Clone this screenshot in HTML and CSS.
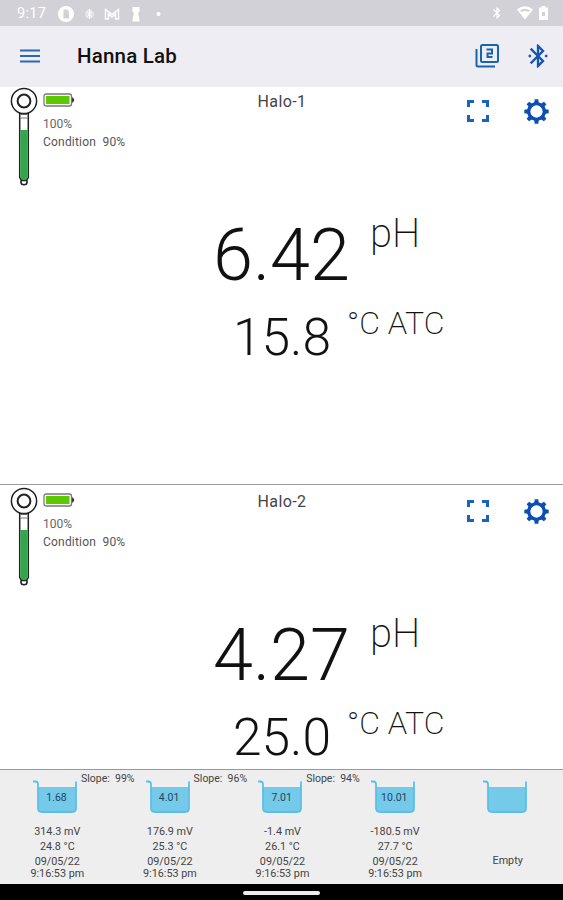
FILE: index.html
```html
<!DOCTYPE html>
<html lang="en">
<head>
  <meta charset="UTF-8">
  <title>Hanna Lab</title>
  <link rel="stylesheet" href="styles.css">
</head>
<body>

<!-- shared shapes -->
<svg class="defs">
  <symbol id="bluetooth" viewBox="0 0 24 24">
    <path d="M17.71 7.71L12 2h-1v7.59L6.41 5 5 6.41 10.59 12 5 17.59 6.41 19 11 14.41V22h1l5.71-5.71-4.3-4.29 4.3-4.29zM13 5.83l1.88 1.88L13 9.59V5.83zm1.88 10.46L13 18.17v-3.76l1.88 1.88z"/>
  </symbol>
  <symbol id="fullscreen" viewBox="0 0 22 22">
    <path d="M0 7V0h7v3H3v4zM15 0h7v7h-3V3h-4zM0 15h3v4h4v3H0zM19 15h3v7h-7v-3h4z"/>
  </symbol>
  <symbol id="gear" viewBox="0 0 24 24">
    <g fill="currentColor">
      <path id="tooth" d="M9.600 5L10.300.3h3.400l.7 4.700z"/>
      <use href="#tooth" transform="rotate(45 12 12)"/>
      <use href="#tooth" transform="rotate(90 12 12)"/>
      <use href="#tooth" transform="rotate(135 12 12)"/>
      <use href="#tooth" transform="rotate(180 12 12)"/>
      <use href="#tooth" transform="rotate(225 12 12)"/>
      <use href="#tooth" transform="rotate(270 12 12)"/>
      <use href="#tooth" transform="rotate(315 12 12)"/>
    </g>
    <circle cx="12" cy="12" r="7.500" fill="none" stroke="currentColor" stroke-width="3.200"/>
  </symbol>
  <symbol id="probe" viewBox="0 0 28 99">
    <g fill="#fff" stroke="#222" stroke-width="1.5">
      <circle cx="14" cy="94.700" r="3.100"/>
      <path d="M9.700 26h8.600v64.500l-2 3h-4.600l-2-3z"/>
      <path d="M10.400 43h7.200v47.500l-1.700 2.500h-3.800l-1.700-2.500z" fill="#2fa84a" stroke="none"/>
      <path d="M10 27.500h8M10 31h8" stroke="#777" stroke-width="1"/>
      <circle cx="14" cy="14" r="12.600"/>
      <circle cx="14" cy="14" r="6.400" stroke-width="2"/>
    </g>
  </symbol>
  <symbol id="battery" viewBox="0 0 32 14">
    <path d="M28.500 4.500h1.600l1.200 2.500-1.200 2.500h-1.600z" fill="#333"/>
    <rect x="1" y="1" width="27.500" height="12" rx="2" fill="#fff" stroke="#777" stroke-width="1.300"/>
    <rect x="3" y="3" width="23.500" height="8" fill="#5cc800"/>
  </symbol>
  <symbol id="beaker" viewBox="0 0 46 34">
    <path d="M6 7h38v21q0 4-4 4H10q-4 0-4-4z" fill="#75caea"/>
    <path d="M1 1.500h2.500q2.500 0 2.500 3V28q0 4 4 4h30q4 0 4-4V1.500" fill="none" stroke="#5abfe8" stroke-width="1.800"/>
  </symbol>
</svg>

<div class="status-bar">
  <span class="time">9:17</span>
  <svg class="status-left" width="108" height="18" viewBox="0 0 108 18" fill="#fff">
    <path fill-rule="evenodd" d="M8 1a8 8 0 1 0 0 16A8 8 0 0 0 8 1zM5.500 4.500h3.500l2 2V13.500H5.500z"/>
    <circle cx="31.500" cy="9" r="4.500" opacity=".45"/>
    <path d="M31.500 4v10M29.500 7l4 4.500M33.500 7l-4 4.500" stroke="#fff" stroke-width="1"/>
    <path d="M47.500 14V4.500l6.500 5 6.500-5V14h-3V9L54 12l-3.500-3v5z" fill="none" stroke="#fff" stroke-width="1.400"/>
    <path d="M74.500 2h7v5l-1.500 1 1.500 6.500V16.500h-7v-2l1.500-6.500-1.500-1z"/>
    <circle cx="100.500" cy="9" r="2"/>
  </svg>
  <svg class="status-right" width="58" height="16" viewBox="0 0 58 16" fill="#fff">
    <use href="#bluetooth" x="-1" y="1" width="14" height="14"/>
    <path fill-rule="evenodd" d="M26 4.500q8-6.500 16 0L34 14.500zM29 5.300q5-3.300 10 0l-1.500 1.800q-3.500-2.300-7 0z"/>
    <path fill-rule="evenodd" d="M50.500 1h4v1.500h2.500V15h-9V2.500h2.500zM51 7v4h3V7z"/>
  </svg>
</div>

<div class="app-bar">
  <svg class="menu" width="20" height="14" viewBox="0 0 20 14">
    <path d="M0 1.500h20M0 7h20M0 12.500h20" stroke="#2c68b0" stroke-width="2"/>
  </svg>
  <h1>Hanna Lab</h1>
  <svg class="pages" width="26" height="26" viewBox="0 0 26 26" fill="none" stroke="#1a63ae" stroke-width="2">
    <rect x="7" y="2" width="17" height="17" rx="1.500"/>
    <path d="M2.500 6v16q0 1.500 1.500 1.500h17"/>
    <path d="M12.500 6.500H18v4h-4.500V14H18.500"/>
  </svg>
  <svg class="bt" width="28" height="28" viewBox="0 0 24 24">
    <use href="#bluetooth" width="24" height="24"/>
    <path d="M5 10.500L6.500 12 5 13.500 3.500 12zM19 10.500l1.500 1.500-1.500 1.500-1.500-1.500z"/>
  </svg>
</div>

<div class="meter meter-1">
  <div class="meter-head">
    <svg class="probe"><use href="#probe"/></svg>
    <div class="info">
      <svg class="battery"><use href="#battery"/></svg>
      <span>100%</span>
      <span class="condition">Condition&nbsp; 90%</span>
    </div>
    <div class="name">Halo-1</div>
    <div class="actions">
      <svg class="full"><use href="#fullscreen"/></svg>
      <svg class="gear"><use href="#gear"/></svg>
    </div>
  </div>
  <div class="reading ph"><span class="value">6.42</span><span class="unit">pH</span></div>
  <div class="reading temp"><span class="value">15.8</span><span class="unit">°C ATC</span></div>
</div>

<div class="meter meter-2">
  <div class="meter-head">
    <svg class="probe"><use href="#probe"/></svg>
    <div class="info">
      <svg class="battery"><use href="#battery"/></svg>
      <span>100%</span>
      <span class="condition">Condition&nbsp; 90%</span>
    </div>
    <div class="name">Halo-2</div>
    <div class="actions">
      <svg class="full"><use href="#fullscreen"/></svg>
      <svg class="gear"><use href="#gear"/></svg>
    </div>
  </div>
  <div class="reading ph"><span class="value">4.27</span><span class="unit">pH</span></div>
  <div class="reading temp"><span class="value">25.0</span><span class="unit">°C ATC</span></div>
</div>

<div class="buffers">
  <div class="buffer">
    <div class="top"><div class="cup"><svg><use href="#beaker"/></svg><b>1.68</b></div><span>Slope:&nbsp; 99%</span></div>
    <p>314.3 mV</p><p>24.8 °C</p><p>09/05/22</p><p class="at">9:16:53 pm</p>
  </div>
  <div class="buffer">
    <div class="top"><div class="cup"><svg><use href="#beaker"/></svg><b>4.01</b></div><span>Slope:&nbsp; 96%</span></div>
    <p>176.9 mV</p><p>25.3 °C</p><p>09/05/22</p><p class="at">9:16:53 pm</p>
  </div>
  <div class="buffer">
    <div class="top"><div class="cup"><svg><use href="#beaker"/></svg><b>7.01</b></div><span>Slope:&nbsp; 94%</span></div>
    <p>-1.4 mV</p><p>26.1 °C</p><p>09/05/22</p><p class="at">9:16:53 pm</p>
  </div>
  <div class="buffer">
    <div class="top"><div class="cup"><svg><use href="#beaker"/></svg><b>10.01</b></div></div>
    <p>-180.5 mV</p><p>27.7 °C</p><p>09/05/22</p><p class="at">9:16:53 pm</p>
  </div>
  <div class="buffer empty">
    <div class="top"><div class="cup"><svg><use href="#beaker"/></svg></div></div>
    <p>Empty</p>
  </div>
</div>

<div class="nav-bar"><div class="handle"></div></div>

</body>
</html>
```
FILE: styles.css
```css
* {
  box-sizing: border-box;
}
body {
  margin: 0;
  height: 900px;
  display: flex;
  flex-direction: column;
  font-family: Roboto, "Liberation Sans", sans-serif;
  background: #fff;
  color: #111;
  overflow: hidden;
}
svg {
  display: block;
  flex: none;
}
.defs {
  position: absolute;
  width: 0;
  height: 0;
}
.status-bar {
  height: 26px;
  flex: none;
  display: flex;
  align-items: center;
  padding: 0 14px 0 17px;
  background: #d2d1d8;
  color: #fff;
}
.time {
  width: 41px;
  padding-top: 1px;
  font-size: 14.5px;
  letter-spacing: 0.3px;
}
.status-left {
  margin-top: 1px;
}
.status-right {
  margin-left: auto;
}
.app-bar {
  height: 61px;
  flex: none;
  display: flex;
  align-items: center;
  padding: 0 11px 2px 20px;
  background: #eeedf4;
}
.app-bar h1 {
  flex: 1;
  margin: 0 0 0 37px;
  font-size: 20.5px;
  font-weight: 500;
  letter-spacing: 0.2px;
}
.pages {
  margin-right: 24px;
}
.bt {
  fill: #1455b0;
}
.meter {
  flex: none;
  border-bottom: 1px solid #999;
  overflow: hidden;
}
.meter-1 {
  height: 398px;
}
.meter-2 {
  height: 285px;
  padding-top: 2px;
}
.meter-head {
  display: grid;
  grid-template-columns: 43px 194px 90px 1fr;
  height: 99px;
}
.probe {
  width: 28px;
  height: 99px;
  margin-left: 10px;
}
.info {
  display: flex;
  flex-direction: column;
  padding-top: 6px;
  font-size: 12px;
  line-height: 18px;
  color: #666;
}
.battery {
  width: 32px;
  height: 14px;
  margin-bottom: 8px;
}
.condition {
  letter-spacing: 0.2px;
  color: #555;
}
.name {
  padding-top: 5px;
  font-size: 16px;
  line-height: 20px;
  letter-spacing: 0.4px;
  text-align: center;
  color: #444;
}
.actions {
  display: flex;
  justify-content: flex-end;
  align-items: center;
  height: 48px;
  gap: 35px;
  padding-right: 14px;
}
.full {
  width: 22px;
  height: 22px;
  fill: #1a63b8;
}
.gear {
  width: 25px;
  height: 25px;
  color: #0b50b0;
}
.reading {
  display: flex;
  font-weight: 300;
  line-height: 1;
}
.value {
  text-align: right;
}
.unit {
  font-weight: 200;
}
.ph {
  height: 96px;
  padding-top: 27px;
}
.ph .value {
  width: 350px;
  padding-top: 7px;
  font-size: 72px;
}
.ph .unit {
  margin-left: 20px;
  padding-top: 1px;
  font-size: 40px;
}
.temp {
  padding-top: 25px;
}
.temp .value {
  width: 331px;
  padding-top: 5px;
  font-size: 51.5px;
}
.temp .unit {
  margin-left: 16px;
  font-size: 32px;
}
.buffers {
  flex: none;
  display: flex;
  height: 114px;
  padding-left: 2px;
  background: #eee;
}
.buffer {
  width: 112.6px;
  flex: none;
  text-align: center;
  font-size: 10.8px;
  color: #444;
}
.top {
  display: flex;
  height: 54px;
  padding-left: 30px;
  font-size: 10.5px;
}
.top span {
  margin: 2px 0 0 3px;
  white-space: nowrap;
}
.cup {
  position: relative;
  width: 46px;
  height: 34px;
  margin-top: 10px;
  flex: none;
}
.cup svg {
  width: 46px;
  height: 34px;
}
.cup b {
  position: absolute;
  left: 3px;
  right: 0;
  top: 11px;
  font-weight: 400;
  color: #1f4658;
}
.buffer p {
  margin: 0 2px 0 0;
  height: 15px;
  line-height: 15px;
}
.buffer .at {
  margin-top: -3px;
}
.empty p {
  margin-top: 29px;
}
.nav-bar {
  height: 16px;
  flex: none;
  padding-top: 7px;
  background: #000;
}
.handle {
  width: 77px;
  height: 4px;
  margin: 0 auto;
  border-radius: 2px;
  background: #eee;
}
```
